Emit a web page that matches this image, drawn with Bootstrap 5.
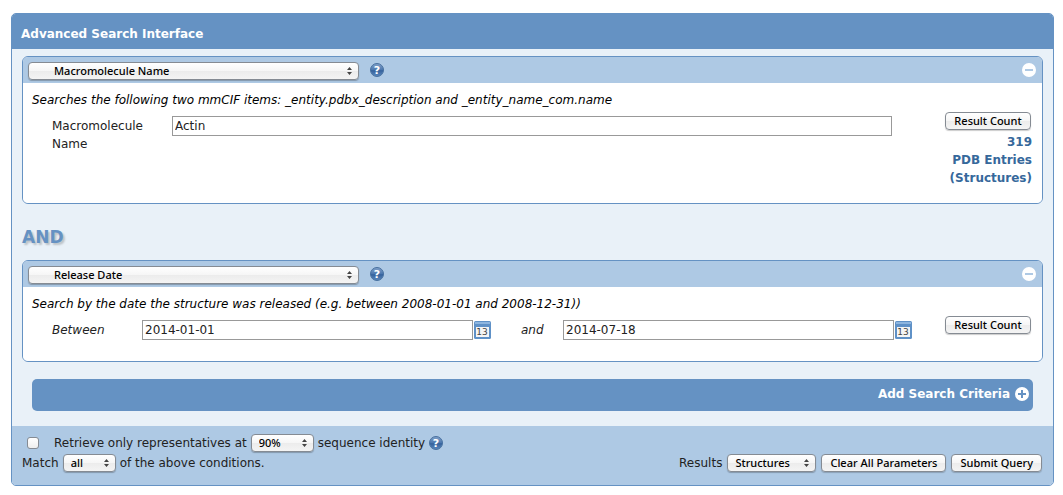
<!DOCTYPE html>
<html lang="en">
<head>
<meta charset="utf-8">
<meta name="viewport" content="width=device-width, initial-scale=1">
<title>Advanced Search Interface</title>
<link href="https://cdn.jsdelivr.net/npm/bootstrap@5.3.0/dist/css/bootstrap.min.css" rel="stylesheet">
<style>
:root { --blue: #6592c3; --light: #aec9e4; --pale: #e9f1f8; }
body { font: 12px/18px Verdana, "DejaVu Sans", sans-serif; color: #222; padding: 13px 9px 9px 11px; }
.panel { border: 1px solid var(--blue); border-radius: 5px; background: var(--pale); overflow: hidden; }
.panel-title { background: var(--blue); color: #fff; font-size: 12px; line-height: 18px; font-weight: bold; padding: 11px 9px 6px; }
.panel-main { padding: 7px 10px 15px; }
.query { border: 1px solid var(--blue); border-radius: 6px; overflow: hidden; }
.query-head { background: var(--light); height: 26px; padding: 0 6px 0 5px; }
.query-body { background: #fff; padding: 8px 10px 0 9px; }
.query-tall { min-height: 120px; }
.query-short { min-height: 74px; }
.criteria { padding-left: 20px; }
.criteria > label { padding-top: 8px; }
.label-wide { width: 120px; }
.label-slim { width: 90px; }
.field-join { width: 72px; padding-left: 30px; }
.text-field { min-width: 0; height: 20px; margin-top: 7px; padding: 1px 2px; border: 1px solid #999; border-radius: 0; background: #fff; color: #222; font-size: 12px; line-height: 18px; }
.cal-btn { margin: 8px 0 0 1px; width: 17px; height: 18px; }
.count-wide { width: 140px; }
.count-slim { width: 120px; }
.count-col { padding-top: 3px; color: #36689b; font-weight: bold; }
.mac-btn, .mac-select { font: 500 11px/16px "Noto Sans", sans-serif; color: #000; border: 1px solid #858b93; border-radius: 4px; background: linear-gradient(#fff, #f6f6f6 48%, #ececec 52%, #f4f4f4); }
.mac-btn { height: 18px; padding: 0 8px; box-shadow: 0 1px 1px rgba(0, 0, 0, .2); }
.count-col .mac-btn { width: 86px; display: block; margin: 0 1px 3px auto; padding: 0; }
.mac-select { appearance: none; height: 18px; padding: 0 20px 0 7px; box-shadow: 0 1px 1px rgba(0, 0, 0, .25); background-image: url("data:image/svg+xml,%3Csvg xmlns='http://www.w3.org/2000/svg' width='5' height='8'%3E%3Cpath d='M0 3 2.500 0 5 3zM0 5h5L2.500 8z' fill='%23444'/%3E%3C/svg%3E"), linear-gradient(#fff, #f6f6f6 48%, #ececec 52%, #f4f4f4); background-repeat: no-repeat; background-position: right 6px center, 0 0; }
.select-type { width: 331px; padding-left: 25px; margin-top: 1px; }
.select-pct { width: 63px; }
.select-all { width: 53px; }
.select-res { width: 89px; }
.icon-btn { border: 0; background: none; padding: 0; line-height: 0; flex: none; }
.help-btn { margin-left: 11px; }
.icon-num { font: 9px "DejaVu Sans", sans-serif; fill: #444; }
.icon-mark { font: bold 11px "DejaVu Sans", sans-serif; fill: #fff; }
.join-word { font-size: 17px; line-height: 24px; font-weight: bold; color: var(--blue); text-shadow: 2px 2px 2px rgba(0, 0, 0, .2); margin: 21px 0 11px; }
.add-bar { background: var(--blue); border-radius: 5px; height: 32px; margin: 17px 10px 0; padding: 0 4px 2px; }
.add-bar a { color: #fff; font-weight: bold; gap: 5px; }
.panel-foot { background: var(--light); padding: 7px 11px 12px 10px; }
.foot-line { min-height: 20px; gap: 4px; }
.foot-actions { gap: 5px; }
.tick { appearance: none; width: 12px; height: 12px; margin: 0 11px 0 5px; border: 1px solid #858b93; border-radius: 3px; background: linear-gradient(#fff, #eee); }
.tick:checked { background: #36689b; }
</style>
</head>
<body>
<svg class="position-absolute" width="0" height="0" aria-hidden="true" xmlns="http://www.w3.org/2000/svg">
  <defs><linearGradient id="orb" x2="0" y2="1"><stop stop-color="#84a3ca"/><stop offset=".5" stop-color="#4a76ae"/><stop offset=".55" stop-color="#35629c"/><stop offset="1" stop-color="#5e8abf"/></linearGradient></defs>
  <symbol id="orb-disc" viewBox="0 0 14 14"><circle cx="7" cy="7" r="6.500" fill="url(#orb)" stroke="#47709f"/></symbol>
  <symbol id="minus" viewBox="0 0 14 14"><circle cx="7" cy="7" r="7" fill="#fff"/><path d="M3 6h8v2H3z" fill="#aec9e4"/></symbol>
  <symbol id="plus" viewBox="0 0 14 14"><circle cx="7" cy="7" r="7" fill="#fff"/><path d="M3 6h3V3h2v3h3v2H8v3H6V8H3z" fill="#6592c3"/></symbol>
  <symbol id="cal" viewBox="0 0 17 18"><rect width="17" height="18" rx="1.500" fill="#5f91c7"/><path d="M1 1h15v2H1z" fill="#8db5df"/><path d="M2 6h13v10H2z" fill="#f5f5f5"/></symbol>
</svg>

<form class="panel" onsubmit="return false">
  <h1 class="panel-title m-0">Advanced Search Interface</h1>

  <div class="panel-main">
    <section class="query">
      <div class="query-head d-flex align-items-center">
        <select class="mac-select select-type" aria-label="Query type"><option>Macromolecule Name</option><option>Release Date</option></select>
        <button type="button" class="icon-btn help-btn" aria-label="Help"><svg width="14" height="14"><use href="#orb-disc"/><text class="icon-mark" x="7" y="11" text-anchor="middle">?</text></svg></button>
        <button type="button" class="icon-btn ms-auto" aria-label="Remove"><svg width="14" height="14"><use href="#minus"/></svg></button>
      </div>
      <div class="query-body query-tall">
        <div class="fst-italic text-black">Searches the following two mmCIF items: _entity.pdbx_description and _entity_name_com.name</div>
        <div class="criteria d-flex align-items-start">
          <label class="label-wide flex-shrink-0" for="molecule">Macromolecule<br>Name</label>
          <input class="text-field flex-fill" id="molecule" type="text" value="Actin">
          <div class="count-col count-wide flex-shrink-0 text-end">
            <button type="button" class="mac-btn">Result Count</button>
            319<br>PDB Entries<br>(Structures)
          </div>
        </div>
      </div>
    </section>

    <div class="join-word">AND</div>

    <section class="query">
      <div class="query-head d-flex align-items-center">
        <select class="mac-select select-type" aria-label="Query type"><option>Release Date</option><option>Macromolecule Name</option></select>
        <button type="button" class="icon-btn help-btn" aria-label="Help"><svg width="14" height="14"><use href="#orb-disc"/><text class="icon-mark" x="7" y="11" text-anchor="middle">?</text></svg></button>
        <button type="button" class="icon-btn ms-auto" aria-label="Remove"><svg width="14" height="14"><use href="#minus"/></svg></button>
      </div>
      <div class="query-body query-short">
        <div class="fst-italic text-black">Search by the date the structure was released (e.g. between 2008-01-01 and 2008-12-31))</div>
        <div class="criteria d-flex align-items-start">
          <label class="label-slim flex-shrink-0 fst-italic" for="from">Between</label>
          <input class="text-field flex-fill" id="from" type="text" value="2014-01-01">
          <button type="button" class="icon-btn cal-btn" aria-label="Pick start date"><svg width="17" height="18"><use href="#cal"/><text class="icon-num" x="8" y="14" text-anchor="middle">13</text></svg></button>
          <label class="field-join flex-shrink-0 fst-italic" for="to">and</label>
          <input class="text-field flex-fill" id="to" type="text" value="2014-07-18">
          <button type="button" class="icon-btn cal-btn" aria-label="Pick end date"><svg width="17" height="18"><use href="#cal"/><text class="icon-num" x="8" y="14" text-anchor="middle">13</text></svg></button>
          <div class="count-col count-slim flex-shrink-0">
            <button type="button" class="mac-btn">Result Count</button>
          </div>
        </div>
      </div>
    </section>

    <div class="add-bar d-flex align-items-center justify-content-end">
      <a href="#" class="d-flex align-items-center text-decoration-none">Add Search Criteria <svg width="14" height="14"><use href="#plus"/></svg></a>
    </div>
  </div>

  <div class="panel-foot d-flex flex-wrap justify-content-between align-items-end">
    <div>
      <div class="foot-line d-flex align-items-center">
        <input class="tick" id="reps" type="checkbox">
        <label for="reps">Retrieve only representatives at</label>
        <select class="mac-select select-pct" id="pct" aria-label="Identity"><option>90%</option><option>70%</option></select>
        <label for="pct">sequence identity</label>
        <button type="button" class="icon-btn" aria-label="Help"><svg width="14" height="14"><use href="#orb-disc"/><text class="icon-mark" x="7" y="11" text-anchor="middle">?</text></svg></button>
      </div>
      <div class="foot-line d-flex align-items-center">
        <label for="match">Match</label>
        <select class="mac-select select-all" id="match"><option>all</option><option>any</option></select>
        of the above conditions.
      </div>
    </div>
    <div class="foot-line foot-actions d-flex align-items-center">
      <label for="results">Results</label>
      <select class="mac-select select-res" id="results"><option>Structures</option><option>Entities</option></select>
      <button type="button" class="mac-btn">Clear All Parameters</button>
      <button type="submit" class="mac-btn">Submit Query</button>
    </div>
  </div>
</form>
<script src="https://cdn.jsdelivr.net/npm/bootstrap@5.3.0/dist/js/bootstrap.bundle.min.js"></script>
</body>
</html>
